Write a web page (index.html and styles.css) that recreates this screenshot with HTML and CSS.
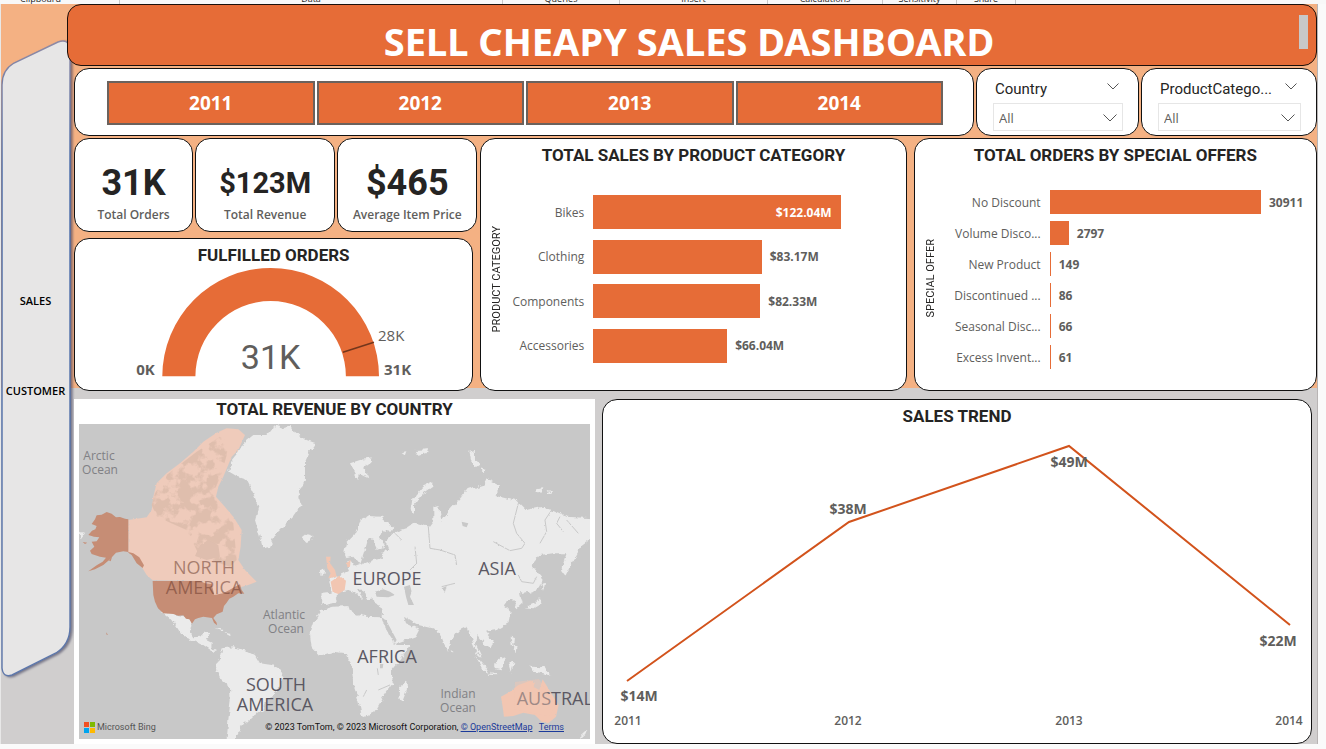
FILE: index.html
```html
<!DOCTYPE html>
<html lang="en">
<head>
<meta charset="utf-8">
<title>Sell Cheapy Sales Dashboard</title>
<link rel="stylesheet" href="styles.css">
</head>
<body>
<div class="ribbon" aria-hidden="true">
  <span class="group g-clip">Clipboard</span>
  <span class="group g-data">Data</span>
  <span class="group g-queries">Queries</span>
  <span class="group g-insert">Insert</span>
  <span class="group g-calc">Calculations</span>
  <span class="group g-sens">Sensitivity</span>
  <span class="group g-share">Share</span>
</div>
<div class="stage">
  <nav class="side">
    <svg class="side-shape" viewBox="0 0 76 645" preserveAspectRatio="none" aria-hidden="true">
      <defs><linearGradient id="edge" x1="0" y1="0" x2="0" y2="1"><stop offset="0" stop-color="#8f8aa5"/><stop offset=".2" stop-color="#4468a8"/><stop offset="1" stop-color="#5f78ab"/></linearGradient></defs>
      <path d="M1 45Q1 30 13 23L57 2Q68 -2 69 10V587Q69 604 55 613L11 635Q2 638 1 628Z" fill="#e7e6e6" stroke="url(#edge)" stroke-width="1.4"/>
    </svg>
    <a class="side-link" href="#sales">SALES</a>
    <a class="side-link" href="#customer">CUSTOMER</a>
  </nav>
  <main class="main">
    <header class="banner">
      <h1>SELL CHEAPY SALES DASHBOARD</h1>
      <span class="thumb"></span>
    </header>
    <div class="content">
      <div class="row filters">
        <div class="card years">
          <button class="year" type="button">2011</button>
          <button class="year" type="button">2012</button>
          <button class="year" type="button">2013</button>
          <button class="year" type="button">2014</button>
        </div>
        <div class="card slicer">
          <div class="slicer-head"><label for="country">Country</label>
            <svg class="chev" viewBox="0 0 12 7"><path d="M.5.5 6 6 11.5.5"/></svg></div>
          <div class="pick"><select id="country"><option>All</option></select>
            <svg class="chev big" viewBox="0 0 14 8"><path d="M.5.5 7 7 13.5.5"/></svg></div>
        </div>
        <div class="card slicer">
          <div class="slicer-head"><label for="category">ProductCatego...</label>
            <svg class="chev" viewBox="0 0 12 7"><path d="M.5.5 6 6 11.5.5"/></svg></div>
          <div class="pick"><select id="category"><option>All</option></select>
            <svg class="chev big" viewBox="0 0 14 8"><path d="M.5.5 7 7 13.5.5"/></svg></div>
        </div>
      </div>

      <div class="row middle">
        <div class="left">
          <div class="kpis">
            <div class="card kpi"><strong>31K</strong><span>Total Orders</span></div>
            <div class="card kpi"><strong class="small">$123M</strong><span>Total Revenue</span></div>
            <div class="card kpi"><strong>$465</strong><span>Average Item Price</span></div>
          </div>
          <section class="card gauge">
            <h2>FULFILLED ORDERS</h2>
            <svg viewBox="0 0 396 112">
              <path d="M87 110A108 108 0 0 1 303 110H270A75 75 0 0 0 120 110Z" fill="#e66c37"/>
              <path d="M267 86 298 76" stroke="#73361c" stroke-width="1.6"/>
              <text class="g-end" x="61" y="109">0K</text>
              <text class="g-end" x="308" y="109">31K</text>
              <text class="g-target" x="302" y="75">28K</text>
              <text class="g-value" x="195" y="103">31K</text>
            </svg>
          </section>
        </div>

        <section class="card chart">
          <h2>TOTAL SALES BY PRODUCT CATEGORY</h2>
          <div class="plot cat">
            <span class="axis">PRODUCT CATEGORY</span>
            <ul class="bars">
              <li><span class="name">Bikes</span><span class="track"><i class="bar" style="width:100%"><b class="inside">$122.04M</b></i></span></li>
              <li><span class="name">Clothing</span><span class="track"><i class="bar" style="width:68.1%"></i><b>$83.17M</b></span></li>
              <li><span class="name">Components</span><span class="track"><i class="bar" style="width:67.5%"></i><b>$82.33M</b></span></li>
              <li><span class="name">Accessories</span><span class="track"><i class="bar" style="width:54.1%"></i><b>$66.04M</b></span></li>
            </ul>
          </div>
        </section>

        <section class="card chart">
          <h2>TOTAL ORDERS BY SPECIAL OFFERS</h2>
          <div class="plot offer">
            <span class="axis">SPECIAL OFFER</span>
            <ul class="bars">
              <li><span class="name">No Discount</span><span class="track"><i class="bar" style="width:100%"></i><b>30911</b></span></li>
              <li><span class="name">Volume Disco...</span><span class="track"><i class="bar" style="width:9.05%"></i><b>2797</b></span></li>
              <li><span class="name">New Product</span><span class="track"><i class="bar" style="width:0.48%"></i><b>149</b></span></li>
              <li><span class="name">Discontinued ...</span><span class="track"><i class="bar" style="width:0.28%"></i><b>86</b></span></li>
              <li><span class="name">Seasonal Disc...</span><span class="track"><i class="bar" style="width:0.21%"></i><b>66</b></span></li>
              <li><span class="name">Excess Invent...</span><span class="track"><i class="bar" style="width:0.2%"></i><b>61</b></span></li>
            </ul>
          </div>
        </section>
      </div>

      <div class="row bottom">
        <section class="map-card">
          <h2>TOTAL REVENUE BY COUNTRY</h2>
          <div class="map">
            <svg viewBox="0 0 511 315">
              <defs>
                <filter id="coast" x="-5%" y="-5%" width="110%" height="110%"><feTurbulence type="fractalNoise" baseFrequency="0.16" numOctaves="3" seed="4"/><feDisplacementMap in="SourceGraphic" scale="6" xChannelSelector="R" yChannelSelector="G"/></filter>
                <filter id="speckle" x="0" y="0" width="100%" height="100%" color-interpolation-filters="sRGB"><feTurbulence type="fractalNoise" baseFrequency="0.028" numOctaves="4" seed="8"/><feColorMatrix values="0 0 0 0 .875 0 0 0 0 .745 0 0 0 0 .68 8 0 0 0 -3.4"/><feComposite in2="SourceGraphic" operator="in"/></filter>
              </defs>
              <rect width="511" height="315" fill="#c8c8c8"/>
              <g filter="url(#coast)" fill="#ebebeb">
                <g transform="translate(-79 -44) scale(.3333)">
                  <path d="M730 190 760 165 800 165 812 150 840 133 850 145 870 138 882 158 900 165 920 180 948 190 930 215 915 250 915 300 895 350 905 375 880 410 850 440 830 460 810 500 790 505 780 470 765 420 775 380 760 340 740 300 710 290 685 275 690 250 710 225Z"/>
                  <path d="M905 472 920 460 940 465 938 478 920 486Z"/>
                  <path d="M485 695 530 705 560 710 575 728 570 755 580 772 600 770 615 755 630 756 618 780 635 788 634 805 652 810 640 815 610 795 575 778 545 765 530 740 510 715Z"/>
                  <path d="M640 740 670 750 665 754ZM672 758 695 762 690 768ZM240 455 252 460 240 475Z"/>
                  <path d="M665 805 700 802 740 812 765 825 780 850 815 855 850 875 845 905 820 950 800 960 790 990 770 1005 760 1010 740 1030 725 1035 715 1060 705 1080 680 1080 685 1020 692 960 690 925 665 905 648 870 650 850 660 830Z"/>
                </g>
                <g transform="translate(221 -34) scale(.3333)">
                  <path d="M65 660 100 650 145 648 150 662 190 680 245 682 255 710 270 740 290 765 330 765 300 810 275 840 278 880 250 920 225 965 195 980 185 975 175 930 160 880 155 830 140 790 100 785 60 797 35 770 30 735 45 690Z"/>
                  <path d="M298 890 318 875 322 895 308 932 295 930Z"/>
                  <path d="M65 612 95 608 93 580 88 565 120 555 150 540 140 515 152 512 165 530 215 512 245 505 250 485 265 478 255 452 285 425 320 415 345 398 385 410 400 390 400 350 418 345 424 395 450 360 485 320 500 300 550 285 560 265 600 285 590 315 650 330 680 360 730 350 800 380 875 385 875 445 840 472 815 520 795 560 785 535 800 490 760 490 720 495 695 525 728 565 720 595 690 605 660 610 668 640 652 655 640 630 620 630 612 650 632 665 625 700 590 720 555 725 580 755 572 775 550 760 532 735 528 765 545 800 535 795 515 750 500 710 480 720 450 755 445 785 430 760 415 720 395 715 355 705 320 685 330 705 360 720 350 740 290 762 268 725 248 680 250 655 225 640 220 625 200 628 190 600 175 598 190 630 160 605 145 600 120 605 100 640 75 645 63 640Z"/>
                  <path d="M132 490 140 455 165 430 180 395 205 378 245 380 280 410 272 425 245 420 240 445 255 470 230 480 222 450 205 445 195 480 180 525 160 500 140 505Z"/>
                  <path d="M150 220 180 210 215 205 210 220 190 235 205 262 180 250 175 270 160 240ZM335 360 340 325 370 290 400 277 400 287 365 312 345 345 345 372ZM505 185 525 180 525 205 540 225 530 232 510 210ZM540 235 558 240 550 250ZM345 180 385 178 380 190 350 195ZM305 190 322 187 318 198ZM705 295 730 292 725 308 708 305ZM740 300 760 305 745 310Z"/>
                  <path d="M62 540 72 535 75 550 65 555ZM525 795 560 835 568 848 550 840ZM565 850 592 852 590 856 567 854ZM582 822 605 797 617 805 605 838 588 834ZM625 820 640 815 632 845ZM632 740 642 745 640 765 652 775 650 790 635 765ZM690 830 735 832 752 860 735 850 700 845ZM720 625 725 640 700 655 675 652 705 640ZM724 575 732 580 728 602ZM840 1040 862 1020 856 1035 842 1048ZM452 780 460 785 457 795Z"/>
                </g>
              </g>
              <g transform="translate(221 -34) scale(.3333)" fill="#c8c8c8" filter="url(#coast)">
                <path d="M225 605 250 598 270 605 285 615 265 622 230 620ZM312 590 330 585 335 605 330 620 342 645 325 645 318 620ZM245 685 258 690 290 750 285 758 265 725ZM312 680 325 690 345 702 338 708 318 700ZM425 595 440 588 435 606ZM240 822 250 822 248 835 240 835ZM485 395 505 400 500 412 488 408Z"/>
                <path d="M385 410 390 475 420 480 465 495 470 525M655 340 640 400 650 430 675 460 665 475 630 482 580 455M720 460 740 425 735 390 755 360M790 425 770 400 780 380M800 390 835 430M345 470 350 520 330 540M655 555 665 575 700 580 710 560M425 590 465 580M232 835 235 855M270 885 235 900M190 920 200 900M285 430 305 450" fill="none" stroke="#c8c8c8" stroke-width="3"/>
              </g>
              <g transform="translate(221 -34) scale(.3333)" fill="#f2c6b2" filter="url(#coast)">
                <path d="M78 500 92 500 90 520 105 540 110 560 85 565 92 550 82 535ZM92 575 118 557 138 572 134 600 115 612 98 606ZM140 518 152 510 150 530 142 532Z"/>
                <path d="M603 920 630 905 655 885 670 880 690 872 705 878 700 890 718 900 728 868 742 890 760 920 776 945 768 980 745 1000 725 995 705 975 670 968 640 978 612 980 608 950Z"/>
              </g>
              <g transform="translate(-79 -44) scale(.3333)">
                <g filter="url(#coast)"><path fill="#efcbbb" d="M385 420 440 412 455 390 460 350 470 310 500 280 540 250 580 215 610 185 650 158 680 145 715 148 735 165 715 210 695 230 670 290 655 320 648 350 670 375 700 410 725 450 722 500 715 540 735 570 755 590 770 605 745 615 710 625 670 645 640 650 600 603 458 601 440 585 425 560 405 530 385 516Z"/></g>
                <path filter="url(#speckle)" fill="#000" d="M465 340 500 285 590 215 660 170 690 190 665 280 640 340 660 385 700 430 710 540 690 560 600 530 560 450 470 410 455 375Z"/>
                <path filter="url(#coast)" fill="#dfbeae" d="M600 495 625 480 655 495 660 530 620 540 585 528Z"/>
                <path fill="#c68d75" d="M385 418 375 416 360 411 348 412 335 401 320 396 305 404 290 406 285 418 275 432 290 438 286 448 276 452 265 465 282 470 298 472 290 484 275 485 283 500 270 512 275 522 300 530 318 533 308 545 290 556 265 574 285 568 310 555 330 538 348 518 370 514 385 516 400 520 418 532 432 556 428 564 410 550 395 525 385 518ZM248 486 262 488 255 492ZM326 541 336 532 332 544ZM318 757 324 764 320 764Z"/>
                <path fill="#c68d75" d="M458 603H600L615 610 635 612 643 645 670 640 688 630 705 620 720 613 725 630 733 641 715 640 700 650 688 656 680 668 672 678 668 695 650 703 640 714 650 728 651 736 642 728 636 714 610 710 595 714 585 718 576 731 568 718 558 716 550 706 535 707 520 702 490 700 474 685 465 665 460 645Z"/>
              </g>
              <g class="continents">
                <text class="over"><tspan x="125" y="150">NORTH</tspan><tspan x="125" y="170">AMERICA</tspan></text>
                <text><tspan x="197" y="267">SOUTH</tspan><tspan x="196" y="287">AMERICA</tspan></text>
                <text x="308" y="161">EUROPE</text><text x="418" y="151">ASIA</text><text x="308" y="239">AFRICA</text>
                <text x="484" y="281">AUSTRALIA</text>
              </g>
              <path fill="#f2c6b2" opacity=".45" d="M436 258 460 255 477 282 470 292 435 285Z"/>
              <g class="oceans">
                <text x="20" y="36">Arctic</text><text x="21" y="50">Ocean</text>
                <text x="205" y="195">Atlantic</text><text x="207" y="209">Ocean</text>
                <text x="379" y="274">Indian</text><text x="379" y="288">Ocean</text>
              </g>
            </svg>
            <div class="credits">
              <span class="bing"><svg viewBox="0 0 11 11"><path fill="#f25022" d="M0 0h5v5H0z"/><path fill="#7fba00" d="M6 0h5v5H6z"/><path fill="#00a4ef" d="M0 6h5v5H0z"/><path fill="#ffb900" d="M6 6h5v5H6z"/></svg>Microsoft Bing</span>
              <span class="copy">© 2023 TomTom, © 2023 Microsoft Corporation, <a href="#osm">© OpenStreetMap</a> <a class="terms" href="#terms">Terms</a></span>
            </div>
          </div>
        </section>

        <section class="card trend">
          <h2>SALES TREND</h2>
          <svg viewBox="0 0 708 316">
            <polyline points="24,254 246,95 466,19 687,198" fill="none" stroke="#d2531c" stroke-width="2"/>
            <g class="points">
              <text x="36" y="274">$14M</text><text x="245" y="87">$38M</text><text x="466" y="40">$49M</text><text x="675" y="219">$22M</text>
            </g>
            <g class="ticks">
              <text x="25" y="298">2011</text><text x="245" y="298">2012</text><text x="466" y="298">2013</text><text x="686" y="298">2014</text>
            </g>
          </svg>
        </section>
      </div>
    </div>
  </main>
</div>
</body>
</html>
```
FILE: styles.css
```css
* { box-sizing: border-box; }

body {
  margin: 0;
  min-height: 100vh;
  background: #fafafa;
  color: #252423;
  font-family: "Open Sans", "Noto Sans", sans-serif;
}

h1, h2, ul { margin: 0; padding: 0; }

h2 {
  font: 700 17px/22px Roboto, sans-serif;
  text-align: center;
}

/* Lower edge of the host window's toolbar */
.ribbon {
  display: flex;
  align-items: flex-end;
  height: 4px;
  overflow: hidden;
  background: #f8f8f8;
}

.group {
  flex: none;
  height: 14px;
  border-right: 1px solid #c8c8c8;
  font-size: 9px;
  line-height: 18px;
  text-align: center;
  white-space: nowrap;
}

.g-clip { width: 120px; padding-right: 38px; }
.g-data { width: 383px; }
.g-queries { width: 117px; }
.g-insert { width: 148px; }
.g-calc { width: 115px; }
.g-sens { width: 74px; }
.g-share { width: 59px; }

.stage {
  display: flex;
  margin-right: 8px;
  border-left: 1px solid #e8e8e8;
  border-right: 1px solid #b8b4b4;
  background: linear-gradient(#f4b183 384px, #d0cece 384px);
}

.side {
  position: relative;
  flex: none;
  display: flex;
  flex-direction: column;
  align-items: center;
  gap: 70px;
  width: 66px;
  padding: 287px 0 0 3px;
}

.side-shape {
  position: absolute;
  left: 0;
  top: 36px;
  width: 76px;
  height: 645px;
  overflow: visible;
  filter: drop-shadow(2px 1px 1px rgba(60, 60, 90, .6));
}

.side-link {
  position: relative;
  color: #000;
  font-size: 11px;
  font-weight: 600;
  line-height: 20px;
  text-decoration: none;
}

.main {
  position: relative;
  flex: 1;
  min-width: 0;
}

.banner {
  position: relative;
  display: flex;
  align-items: center;
  justify-content: center;
  min-height: 62px;
  padding: 12px 6px 0 0;
  border: 1px solid #1a0f0a;
  border-radius: 14px;
  background: #e66c37;
}

.banner h1 {
  color: #fff;
  font: 700 38px/46px "Noto Sans", sans-serif;
}

.thumb {
  position: absolute;
  top: 10px;
  right: 8px;
  width: 9px;
  height: 34px;
  background: #c8c8c8;
}

.content {
  display: flex;
  flex-direction: column;
  gap: 2px;
  padding: 2px 0 0 7px;
}

.row { display: grid; }

.card {
  min-width: 0;
  border: 1px solid #111;
  border-radius: 15px;
  background: #fff;
}

.filters {
  grid-template-columns: 900fr 163fr 176fr;
  gap: 2px;
}

.years {
  display: flex;
  gap: 2px;
  padding: 12px 30px 10px 32px;
}

.year {
  flex: 1;
  height: 44px;
  border: 2px solid #6b625d;
  background: #e66c37;
  color: #fff;
  font: 700 19px/24px "Open Sans", sans-serif;
}

.slicer { padding: 10px 15px 4px 16px; }

.slicer-head {
  display: flex;
  justify-content: space-between;
  padding: 0 4px 0 2px;
  font: 400 15px/20px Roboto, sans-serif;
}

.chev {
  width: 12px;
  height: 7px;
  margin-top: 4px;
  fill: none;
  stroke: #555;
}

.pick {
  position: relative;
  margin-top: 4px;
}

.pick select {
  width: 100%;
  height: 28px;
  padding: 2px 5px 0;
  appearance: none;
  border: 1px solid #e6e6e6;
  background: #fff;
  color: #605e5c;
  font: 400 13px/20px "Open Sans", sans-serif;
}

.chev.big {
  position: absolute;
  top: 7px;
  right: 6px;
  width: 14px;
  height: 8px;
  pointer-events: none;
}

.middle {
  grid-template-columns: 403fr 426fr 407fr;
  column-gap: 3px;
  min-height: 253px;
}

.left {
  display: flex;
  flex-direction: column;
  gap: 6px;
}

.middle > .chart:last-child { margin-left: 4px; }

.kpis {
  display: grid;
  grid-template-columns: 119fr 140fr 140fr;
  gap: 2px;
}

.kpi {
  display: flex;
  flex-direction: column;
  align-items: center;
  min-height: 94px;
  padding-top: 22px;
}

.kpi strong {
  font: 700 36px/44px Roboto, sans-serif;
}

.kpi .small { font-size: 29px; }

.kpi span {
  color: #605e5c;
  font-size: 12px;
  font-weight: 600;
  line-height: 20px;
  white-space: nowrap;
}

.gauge {
  flex: 1;
  margin-right: 4px;
  padding-top: 5px;
}

.gauge svg {
  display: block;
  width: 100%;
}

.gauge text { fill: #605e5c; }
.g-end { font-size: 15px; font-weight: 700; }
.g-target { font-size: 15px; }
.gauge .g-value { font: 400 34px Roboto, sans-serif; text-anchor: middle; }

.chart {
  display: flex;
  flex-direction: column;
  padding-top: 5px;
}

.plot { display: flex; flex: 1; }

.axis {
  align-self: center;
  flex: none;
  width: 16px;
  margin-bottom: 24px;
  font: 400 11px/16px Roboto, sans-serif;
  text-align: center;
  writing-mode: vertical-rl;
  transform: rotate(180deg);
  white-space: nowrap;
}

.bars {
  display: flex;
  flex-direction: column;
  flex: 1;
  list-style: none;
}

.bars li { display: flex; align-items: center; }

.name {
  flex: none;
  color: #605e5c;
  font-size: 12px;
  text-align: right;
  white-space: nowrap;
}

.track {
  display: flex;
  flex: 1;
  align-items: center;
  gap: 8px;
}

.bar {
  display: flex;
  flex: none;
  align-items: center;
  justify-content: flex-end;
  min-width: 1px;
  background: #e66c37;
  font-style: normal;
}

.track b {
  color: #605e5c;
  font-size: 12px;
  font-weight: 700;
}

.track .inside { padding-right: 9px; color: #fff; }

.cat { padding: 29px 65px 27px 8px; }
.cat .bars { justify-content: space-between; }
.cat .axis { margin-bottom: 0; }
.cat .name { width: 79px; margin-right: 9px; }
.cat .bar { height: 34px; }

.offer { padding: 24px 55px 0 8px; }
.offer .bars { gap: 7px; }
.offer .name { width: 102px; margin-right: 9px; }
.offer .bar { height: 24px; }

.bottom {
  grid-template-columns: 521fr 710fr;
  gap: 7px;
  margin-top: 6px;
  padding-right: 5px;
}

.map-card {
  min-width: 0;
  padding: 0 5px 5px;
  background: #fff;
}

.map-card h2 { padding-bottom: 5px; line-height: 20px; }

.map { position: relative; }

.map > svg {
  display: block;
  width: 100%;
}

.continents text {
  fill: #5b5863;
  font-size: 18px;
  text-anchor: middle;
}

.continents .over { fill: #6a3a2c; fill-opacity: .55; }

.oceans text {
  fill: #808084;
  font-size: 12px;
  text-anchor: middle;
}

.credits {
  position: absolute;
  right: 26px;
  bottom: 4px;
  left: 5px;
  display: flex;
  align-items: center;
  justify-content: space-between;
  font: 400 9px/16px Roboto, sans-serif;
  white-space: nowrap;
}

.bing {
  display: flex;
  align-items: center;
  gap: 2px;
  color: #555;
}

.bing svg { width: 11px; height: 11px; }

.copy { color: #111; }
.copy a { color: #1c3a9a; }
.copy .terms { margin-left: 4px; }

.trend { padding-top: 5px; }

.trend svg {
  display: block;
  width: 100%;
}

.trend text {
  fill: #605e5c;
  text-anchor: middle;
}

.points text { font-size: 14px; font-weight: 700; }
.ticks text { font-size: 12px; font-weight: 600; }
```
